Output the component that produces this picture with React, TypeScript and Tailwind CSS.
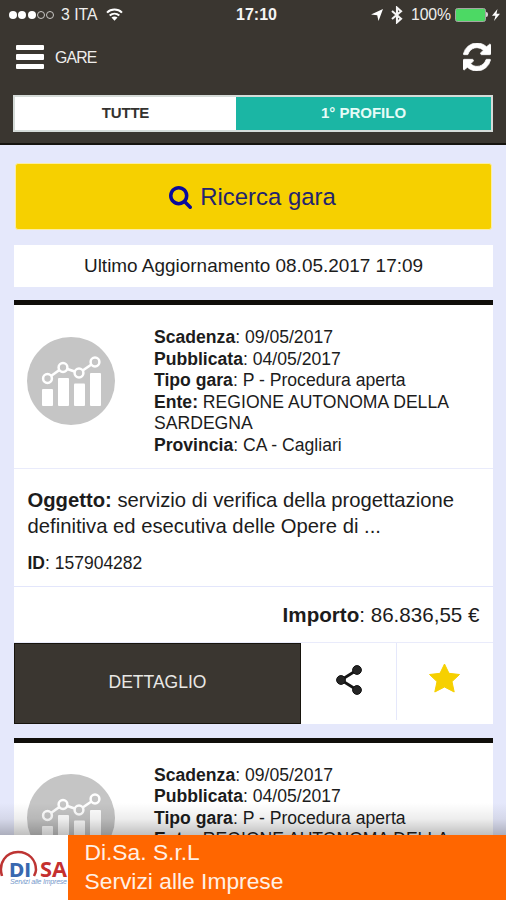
import React from "react";

function Dot({ filled }: { filled?: boolean }) {
  return (
    <span
      className={
        filled
          ? "h-[8px] w-[8px] rounded-full bg-white"
          : "h-[8px] w-[8px] rounded-full border border-[#c9c8c5]"
      }
    />
  );
}

function StatusBar() {
  return (
    <div className="flex h-[29px] items-center text-[16px] leading-[29px] text-[#efeeec]">
      <div className="flex w-[236px] items-center pl-[9px]">
        <div className="flex w-[52px] gap-[1.3px]">
          <Dot filled />
          <Dot filled />
          <Dot filled />
          <Dot />
          <Dot />
        </div>
        <span className="w-[45px] text-[15.8px]">3 ITA</span>
        <svg width="17" height="14" viewBox="0 0 17 14" fill="none" stroke="#fff" strokeWidth="2">
          <path d="M1 4.6C5.2.6 11.8.6 16 4.6" />
          <path d="M3.7 7.6C6.5 5 10.5 5 13.3 7.6" />
          <path d="M5.5 9.5C7.2 8 9.8 8 11.5 9.5L8.5 12.8Z" fill="#fff" stroke="none" />
        </svg>
      </div>
      <span className="w-[135px] text-[16px] font-bold text-[#f5f5f4]">17:10</span>
      <svg className="mr-[8px]" width="12" height="12" viewBox="0 0 12 12" fill="#fff">
        <path d="M12 0L7.5 12L6.2 6.3L0 5.6Z" />
      </svg>
      <svg className="mr-[8px]" width="12" height="18" viewBox="0 0 12 18" fill="none" stroke="#f5f5f5" strokeWidth="2.1">
        <path d="M1 5L10 12.7L6 16.3V1.7L10 5.3L1 13" />
      </svg>
      <span className="w-[44px] text-[15.8px] tracking-[-0.1px]">100%</span>
      <div className="h-[14px] w-[31px] rounded-[2.5px] border border-[#a5a5a2] bg-[#4cd964]" />
      <div className="h-[5px] w-[2px] rounded-r bg-[#d4d4d2]" />
      <svg className="ml-[4px]" width="8" height="12" viewBox="0 0 8 12" fill="#fff">
        <path d="M5.5 0L0 6.8H3.5L2 12L8 4.8H4.5Z" />
      </svg>
    </div>
  );
}

function Header() {
  return (
    <header className="h-[145px] border-b-2 border-[#15130e] bg-[#3a3630]">
      <StatusBar />
      <div className="flex h-[56px] items-center pl-4 pr-[15px]">
        <div className="flex w-[39px] flex-col gap-[4px]">
          <span className="h-[5.5px] w-[28px] rounded-[1px] bg-white" />
          <span className="h-[5.5px] w-[28px] rounded-[1px] bg-white" />
          <span className="h-[5.5px] w-[28px] rounded-[1px] bg-white" />
        </div>
        <span className="flex-1 pt-px text-[15.8px] tracking-[-0.8px] text-[#efeeec]">GARE</span>
        <svg width="28" height="28" viewBox="0 0 1536 1536" fill="#fff" stroke="#fff" strokeWidth="40">
          <path d="M1511 928q0 5-1 7-64 268-268 434.5t-478 166.5q-146 0-282.5-55t-243.5-157l-129 129q-19 19-45 19t-45-19-19-45v-448q0-26 19-45t45-19h448q26 0 45 19t19 45-19 45l-137 137q71 66 161 102t187 36q134 0 250-65t186-179q11-17 53-117 8-23 30-23h192q13 0 22.5 9.5t9.5 22.5zm25-800v448q0 26-19 45t-45 19h-448q-26 0-45-19t-19-45 19-45l138-138q-148-137-349-137-134 0-250 65t-186 179q-11 17-53 117-8 23-30 23h-199q-13 0-22.5-9.5t-9.5-22.5v-7q65-268 270-434.5t480-166.5q146 0 284 55.5t245 156.5l130-129q19-19 45-19t45 19 19 45z" />
        </svg>
      </div>
      <div className="mx-[13px] mt-[10px] flex h-[37px] border-2 border-[#d5dbd8] text-center text-[15px] font-bold leading-[32px]">
        <div className="w-[221px] bg-white tracking-[-0.2px] text-[#34322f]">TUTTE</div>
        <div className="flex-1 bg-[#1bb6a4] text-[#e6fbf7]">1° PROFILO</div>
      </div>
    </header>
  );
}

function ChartBadge() {
  return (
    <svg width="88" height="88" viewBox="0 0 88 88">
      <circle cx="44" cy="44" r="44" fill="#c5c5c5" />
      <g fill="#fff">
        <rect x="15" y="52" width="11" height="17" rx="1" />
        <rect x="31" y="41" width="11" height="28" rx="1" />
        <rect x="47" y="46.5" width="11" height="22.5" rx="1" />
        <rect x="63" y="36" width="11" height="33" rx="1" />
      </g>
      <path d="M20.5 41.5L36 30.5L52 36L68 25" fill="none" stroke="#fff" strokeWidth="2.5" />
      <g fill="#c5c5c5" stroke="#fff" strokeWidth="2.5">
        <circle cx="20.5" cy="41.5" r="4.4" />
        <circle cx="36" cy="30.5" r="4.4" />
        <circle cx="52" cy="36" r="4.4" />
        <circle cx="68" cy="25" r="4.4" />
      </g>
    </svg>
  );
}

function TenderCard() {
  return (
    <article className="ml-[14px] mr-[13px] border-t-[5px] border-[#100e0a] bg-white text-[#1c1c1c]">
      <div className="flex h-[164px] border-b border-[#e9ebfb] pt-[22px]">
        <div className="w-[140px] pl-[13px] pt-[9.5px]">
          <ChartBadge />
        </div>
        <div className="flex-1 text-[17.6px] leading-[21.6px]">
          <p><b>Scadenza</b>: 09/05/2017</p>
          <p><b>Pubblicata</b>: 04/05/2017</p>
          <p><b>Tipo gara</b>: P - Procedura aperta</p>
          <p><b>Ente:</b> REGIONE AUTONOMA DELLA<br />SARDEGNA</p>
          <p><b>Provincia</b>: CA - Cagliari</p>
        </div>
      </div>
      <div className="h-[118px] border-b border-[#e3e6fb] pl-[13.5px] pt-[17.5px]">
        <p className="whitespace-nowrap text-[20.25px] leading-[26px]">
          <b>Oggetto:</b> servizio di verifica della progettazione<br />
          definitiva ed esecutiva delle Opere di ...
        </p>
        <p className="mt-[13px] text-[17.5px] leading-[22px]"><b>ID</b>: 157904282</p>
      </div>
      <p className="h-[56px] border-b border-[#e9ebfb] pr-[13.5px] text-right text-[20.6px] leading-[55px]">
        <b>Importo</b>: 86.836,55 €
      </p>
      <div className="flex h-[81px]">
        <div className="w-[287px] border border-[#17140d] bg-[#3a3630] text-center text-[17.5px] leading-[76px] text-[#e9e8e5]">
          DETTAGLIO
        </div>
        <div className="mb-[4px] flex w-[96px] justify-center border-r border-[#e5e8fb] pt-[21.5px]">
          <svg width="26" height="30" viewBox="0 0 26 30">
            <path d="M21 5L5 15L21 25" fill="none" stroke="#141414" strokeWidth="2.8" />
            <g fill="#252525" stroke="#111" strokeWidth="1">
              <circle cx="21" cy="5" r="4.4" />
              <circle cx="5" cy="15" r="4.4" />
              <circle cx="21" cy="25" r="4.4" />
            </g>
          </svg>
        </div>
        <div className="flex flex-1 justify-center pr-[2px] pt-[20px]">
          <svg width="31" height="30" viewBox="0 0 31 30" fill="#f6d000" stroke="#f6d000" strokeLinejoin="round">
            <path d="M15.5 1L20 10.3L30.5 11.5L23 18.6L25.2 29L15.5 24L5.8 29L8 18.6L.5 11.5L11 10.3Z" />
          </svg>
        </div>
      </div>
    </article>
  );
}

function SponsorBanner() {
  return (
    <footer className="absolute inset-x-0 bottom-0">
      <div className="h-[32px] bg-gradient-to-b from-transparent via-black/7 to-black/25" />
      <div className="flex h-[65px]">
        <div className="w-[68px] bg-white">
          <svg width="68" height="65" viewBox="0 1 68 65">
            <path d="M2 42C-2 29 6 18 18 18C29 18 36 26 36 36C36 38 35 40 34 42" fill="none" stroke="#bd3433" strokeWidth="2.5" />
            <text x="9" y="43" fill="#3868b0" fontFamily="DejaVu Sans, sans-serif" fontWeight="700" fontSize="19.5" textLength="22" lengthAdjust="spacingAndGlyphs">DI</text>
            <text x="40" y="43" fill="#c5302f" fontFamily="Open Sans, sans-serif" fontWeight="700" fontSize="20.5" textLength="27" lengthAdjust="spacingAndGlyphs">SA</text>
            <text x="10" y="50" fill="#7799cb" fontFamily="Liberation Sans, sans-serif" fontStyle="italic" fontSize="7" textLength="57">Servizi alle Imprese</text>
          </svg>
        </div>
        <div className="flex-1 bg-[#ff6600] pl-[16.5px] pt-[3px] text-[22.8px] leading-[29px] text-[#fff0e5]">
          <p>Di.Sa. S.r.L</p>
          <p>Servizi alle Imprese</p>
        </div>
      </div>
    </footer>
  );
}

export default function App() {
  return (
    <div className="relative h-[900px] w-[506px] overflow-hidden bg-[#e5e8fb] font-['Liberation_Sans',Arial,sans-serif]">
      <Header />
      <main className="h-[690px] overflow-hidden">
        <button className="ml-[15px] mt-[18px] flex h-[67px] w-[477px] items-center justify-center gap-[8px] rounded-[3px] border border-[#fbeea3] bg-[#f6d000] pr-[2px] pt-px text-[23.9px] text-[#24246e]">
          <svg width="23" height="23" viewBox="64 128 1664 1664" fill="#0a0a9c">
            <path d="M1216 832q0-185-131.5-316.5t-316.5-131.5-316.5 131.5-131.5 316.5 131.5 316.5 316.5 131.5 316.5-131.5 131.5-316.5zm512 832q0 52-38 90t-90 38q-54 0-90-38l-343-342q-179 124-399 124-143 0-273.5-55.5t-225-150-150-225-55.5-273.5 55.5-273.5 150-225 225-150 273.5-55.5 273.5 55.5 225 150 150 225 55.5 273.5q0 220-124 399l343 343q37 37 37 90z" />
          </svg>
          Ricerca gara
        </button>
        <p className="mb-[13px] ml-[14px] mr-[13px] mt-[15px] h-[42px] bg-white text-center text-[18.95px] leading-[42px] text-[#1c1c1c]">
          Ultimo Aggiornamento 08.05.2017 17:09
        </p>
        <div className="flex flex-col gap-[13.5px]">
          <TenderCard />
          <TenderCard />
        </div>
      </main>
      <SponsorBanner />
    </div>
  );
}
